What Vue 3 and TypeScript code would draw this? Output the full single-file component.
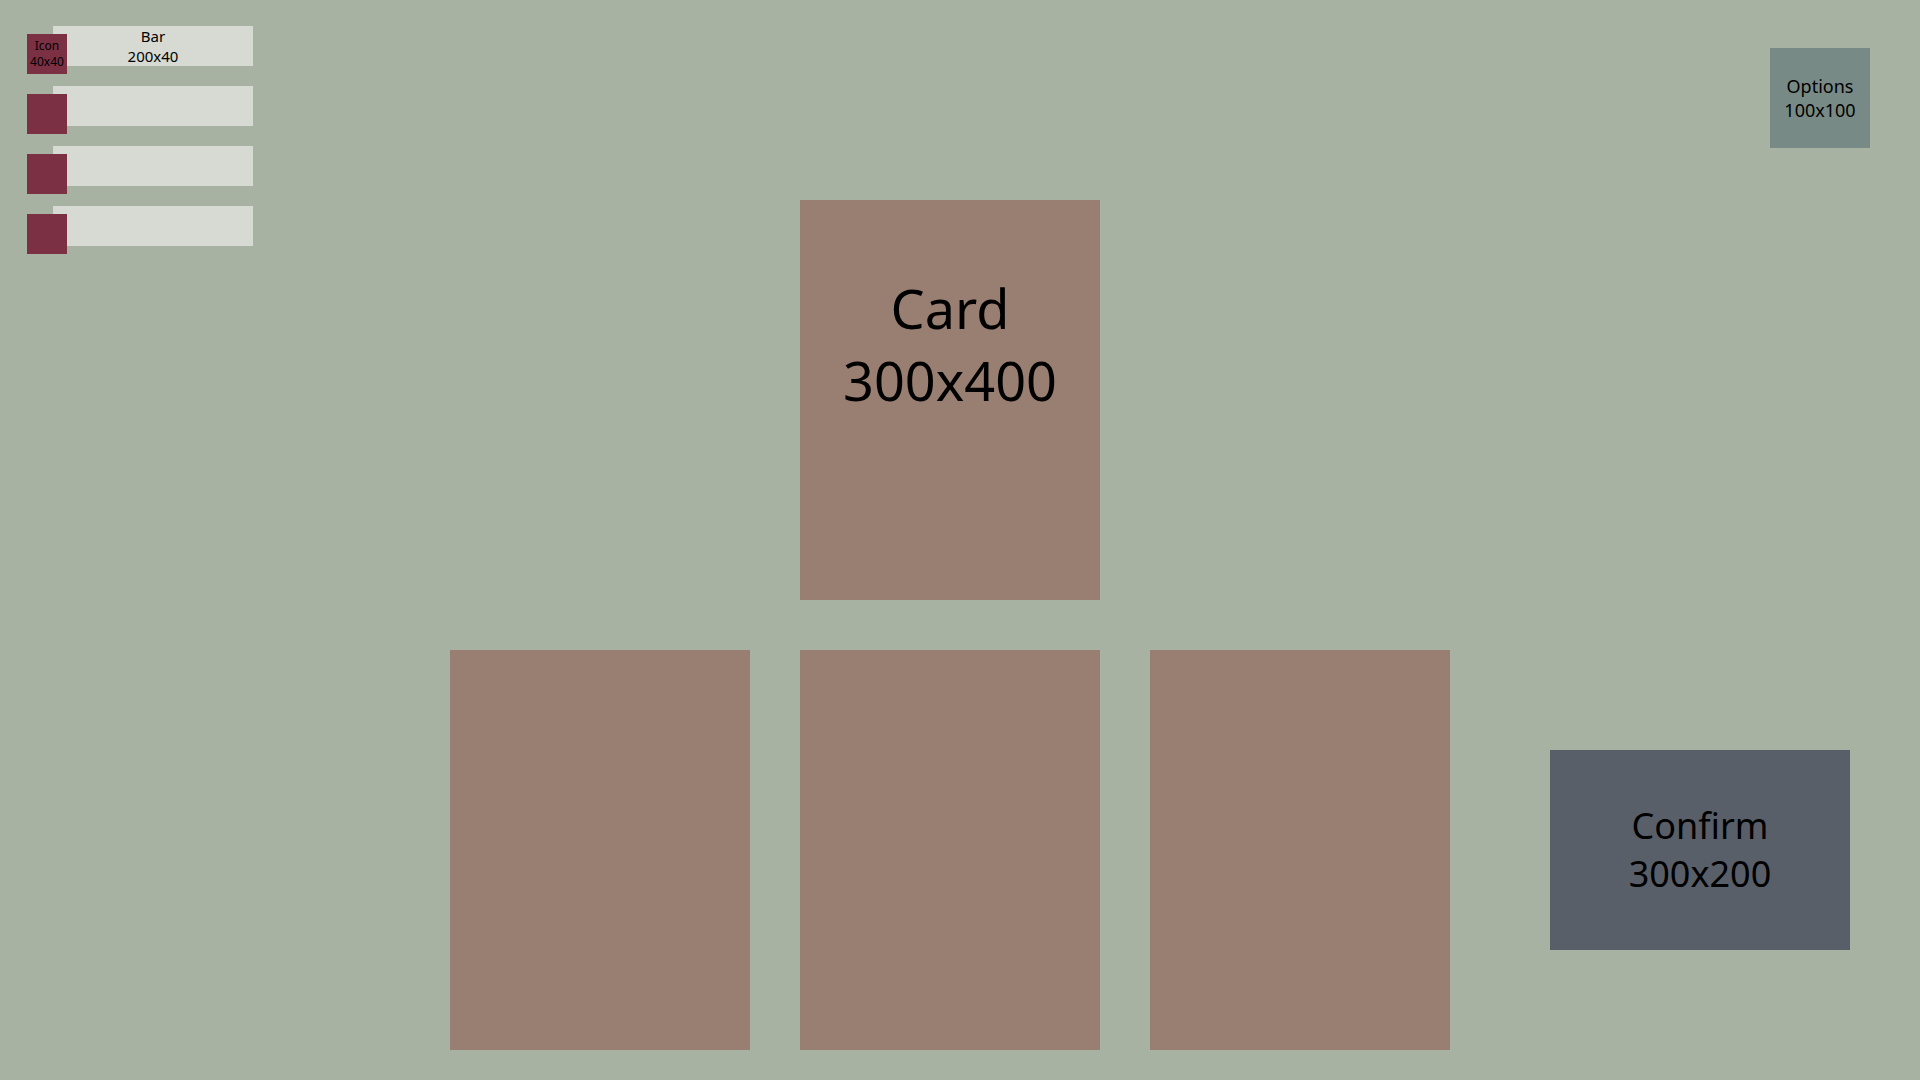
<script setup lang="ts">
interface Stat {
  icon: string[]
  bar: string[]
}

const stats: Stat[] = [
  { icon: ['Icon', '40x40'], bar: ['Bar', '200x40'] },
  { icon: [], bar: [] },
  { icon: [], bar: [] },
  { icon: [], bar: [] },
]

const handSize = 3
</script>

<template>
  <main class="board">
    <ul class="stats">
      <li v-for="(stat, index) in stats" :key="index" class="stat">
        <div class="bar">
          <span v-for="line in stat.bar" :key="line">{{ line }}</span>
        </div>
        <div class="icon">
          <span v-for="line in stat.icon" :key="line">{{ line }}</span>
        </div>
      </li>
    </ul>

    <section class="table">
      <article class="card">
        <span>Card</span>
        <span>300x400</span>
      </article>
    </section>

    <aside class="menu">
      <button type="button" class="options">
        <span>Options</span>
        <span>100x100</span>
      </button>
    </aside>

    <section class="hand">
      <article v-for="n in handSize" :key="n" class="card"></article>
    </section>

    <aside class="actions">
      <button type="button" class="confirm">
        <span>Confirm</span>
        <span>300x200</span>
      </button>
    </aside>
  </main>
</template>

<style>
body {
  margin: 0;
  background: #a8b2a2;
}
</style>

<style scoped>
.board {
  box-sizing: border-box;
  min-height: 100vh;
  padding: 0 20px 30px 0;
  display: grid;
  grid-template-columns: 1fr auto 1fr;
  grid-template-rows: 1fr auto;
  row-gap: 50px;
  background: #a8b2a2;
  color: #000;
  font-family: "Noto Sans", "Open Sans", sans-serif;
}

.stats {
  list-style: none;
  margin: 0;
  padding: 26px 0 0 53px;
  display: flex;
  flex-direction: column;
  gap: 20px;
}

.stat {
  position: relative;
  width: 200px;
}

.bar,
.icon {
  height: 40px;
  display: flex;
  flex-direction: column;
  align-items: center;
  justify-content: center;
}

.bar {
  background: #d7dad2;
  font-size: 15px;
  line-height: 20px;
}

.icon {
  position: absolute;
  top: 8px;
  left: -26px;
  width: 40px;
  background: #7b3044;
  font-size: 12px;
  line-height: 16px;
}

.table {
  display: flex;
  justify-content: center;
  padding-top: 200px;
}

.hand {
  grid-column: 2;
  display: flex;
  gap: 50px;
}

.card {
  box-sizing: border-box;
  width: 300px;
  height: 400px;
  padding-top: 72px;
  display: flex;
  flex-direction: column;
  align-items: center;
  background: #997e72;
  font-size: 54px;
  line-height: 72px;
}

.menu {
  display: flex;
  justify-content: flex-end;
  align-items: flex-start;
  padding: 48px 30px 0 0;
}

.actions {
  display: flex;
  justify-content: flex-end;
  align-items: center;
  padding-right: 50px;
}

.options,
.confirm {
  box-sizing: border-box;
  border: 0;
  padding: 0;
  display: flex;
  flex-direction: column;
  align-items: center;
  justify-content: center;
  color: inherit;
  font-family: inherit;
  cursor: pointer;
}

.options {
  width: 100px;
  height: 100px;
  background: #788a86;
  font-size: 18px;
  line-height: 24px;
}

.confirm {
  width: 300px;
  height: 200px;
  background: #595f69;
  font-size: 36px;
  line-height: 48px;
}
</style>
